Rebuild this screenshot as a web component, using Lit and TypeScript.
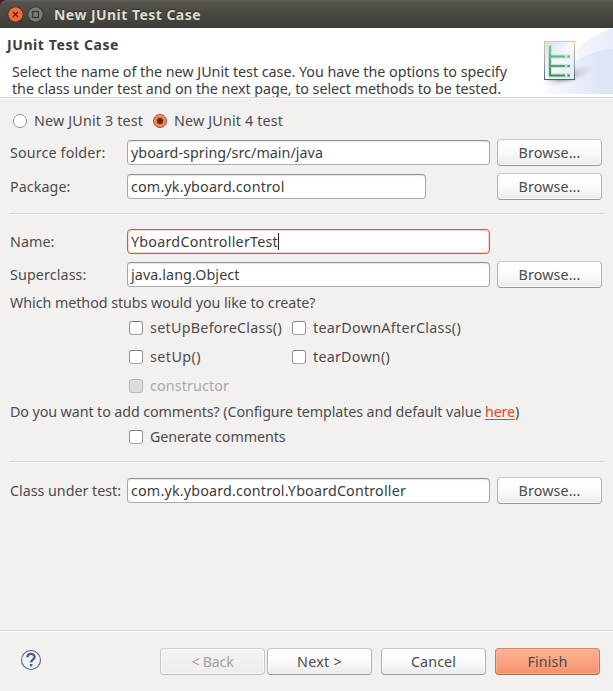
import { LitElement, html, css, svg, nothing } from "lit";
import { customElement, property } from "lit/decorators.js";
import { classMap } from "lit/directives/class-map.js";

// A run of text tracked so that it spans a given width.
@customElement("fit-text")
class FitText extends LitElement {
  @property() text = "";
  @property({ type: Number }) width = 0;
  static styles = css`
    :host { display: inline-block; white-space: pre; flex: none; }
    .run { display: inline-block; }
  `;
  render() {
    return html`<span class="run">${this.text}</span>`;
  }
  updated() {
    const run = this.renderRoot.querySelector(".run") as HTMLElement;
    run.style.letterSpacing = "0";
    const natural = run.getBoundingClientRect().width;
    run.style.letterSpacing = `${(this.width - natural) / this.text.length}px`;
  }
}

const t = (text: string, width: number) => html`<fit-text .text=${text} .width=${width}></fit-text>`;

@customElement("push-button")
class PushButton extends LitElement {
  @property() label = "";
  @property({ type: Number }) span = 0;
  @property() kind = "";
  static styles = css`
    :host { display: block; flex: none; width: 105px; height: 27px; }
    .btn {
      box-sizing: border-box; width: 105px; height: 27px; padding: 0; display: flex;
      align-items: center; justify-content: center; border-radius: 4px;
      border: 1px solid; border-color: #c9c7c4 #b4b2af #999794 #b4b2af;
      background: linear-gradient(#ffffff, #fafafa 50%, #ebeae8);
      box-shadow: inset 0 0 0 1px rgba(255, 255, 255, 0.6);
      font: inherit; color: #4c4c4c;
    }
    .disabled {
      border-color: #d3d1ce #c9c7c4 #c2c0bd #c9c7c4;
      background: linear-gradient(#f5f4f3, #eeedeb); color: #a3a2a0;
    }
    .primary {
      border-color: #c28a73 #b17e69 #a06d58 #b17e69;
      background: linear-gradient(#ffb191, #fba382 50%, #f5916c);
      box-shadow: inset 0 0 0 1px rgba(255, 190, 160, 0.5);
    }
  `;
  render() {
    return html`<button class=${classMap({ btn: true, [this.kind || "plain"]: true })}>
      ${t(this.label, this.span)}
    </button>`;
  }
}

@customElement("check-option")
class CheckOption extends LitElement {
  @property() label = "";
  @property({ type: Number }) span = 0;
  @property({ type: Boolean }) disabled = false;
  static styles = css`
    :host { display: block; }
    .opt { display: flex; align-items: center; height: 20px; gap: 7px; }
    .box {
      box-sizing: border-box; width: 14px; height: 14px; border-radius: 3px; background: #fff;
      border: 1px solid; border-color: #868482 #96948f #a5a3a0 #96948f;
    }
    .off { color: #aaa9a7; }
    .off .box { background: #dddcda; border-color: #b9b7b4; }
  `;
  render() {
    return html`<div class=${classMap({ opt: true, off: this.disabled })}>
      <span class="box"></span>${t(this.label, this.span)}
    </div>`;
  }
}

@customElement("form-row")
class FormRow extends LitElement {
  @property() label = "";
  @property({ type: Number }) labelSpan = 0;
  @property() value = "";
  @property({ type: Number }) valueSpan = 0;
  @property({ type: Boolean }) short = false;
  @property({ type: Boolean }) focused = false;
  @property({ type: Boolean }) browse = false;
  static styles = css`
    :host { display: block; }
    .row { display: grid; grid-template-columns: 117px 363px 105px; column-gap: 0; height: 27px; align-items: center; }
    .field {
      box-sizing: border-box; height: 25px; width: 363px; padding-left: 3px; display: flex; align-items: center;
      border: 1px solid; border-color: #94918b #aaa7a2 #b0ada8 #aaa7a2; border-radius: 4px;
      background: #fff; color: #3c3c3c; box-shadow: inset 0 1px 1px rgba(0, 0, 0, 0.1);
    }
    .short { width: 299px; }
    .focused { border-color: #d6592b; box-shadow: inset 0 0 0 1px #f8d5c6; }
    .caret { width: 1px; height: 17px; background: #222; }
    push-button { margin-left: 7px; }
  `;
  render() {
    return html`<div class="row">
      ${t(this.label, this.labelSpan)}
      <div class=${classMap({ field: true, short: this.short, focused: this.focused })}>
        ${t(this.value, this.valueSpan)}${this.focused ? html`<span class="caret"></span>` : nothing}
      </div>
      ${this.browse ? html`<push-button .label=${"Browse..."} .span=${62}></push-button>` : nothing}
    </div>`;
  }
}

const bannerArt = svg`
  <defs>
    <linearGradient id="sweep" x1="0" x2="1"><stop offset="0" stop-color="#fff"/><stop offset="1" stop-color="#dde4f6"/></linearGradient>
    <linearGradient id="sweep2" x1="0" x2="1"><stop offset="0" stop-color="#fff"/><stop offset=".8" stop-color="#dce4f6"/></linearGradient>
    <linearGradient id="page" x1="0" y1="0" x2="1" y2="1"><stop offset="0" stop-color="#d5e0f2"/><stop offset=".5" stop-color="#f4f8fd"/><stop offset="1" stop-color="#dfe8f5"/></linearGradient>
    <linearGradient id="edge" x1="0" y1="0" x2="0" y2="1"><stop offset="0" stop-color="#e8c48f"/><stop offset=".55" stop-color="#9aa3a8"/><stop offset="1" stop-color="#4d6474"/></linearGradient>
    <linearGradient id="green" x1="0" y1="0" x2="0" y2="1"><stop offset="0" stop-color="#80c09a"/><stop offset="1" stop-color="#3c9160"/></linearGradient>
    <radialGradient id="shade"><stop offset="0" stop-color="#8d8798" stop-opacity=".65"/><stop offset="1" stop-color="#b9b5c4" stop-opacity="0"/></radialGradient>
  </defs>
  <path d="M40 66C62 52 68 12 113 0V66Z" fill="url(#sweep)" opacity=".65"/>
  <path d="M38 66C62 58 66 24 113 21V66Z" fill="url(#sweep2)" opacity=".9"/>
  <ellipse cx="68" cy="48" rx="27" ry="8" fill="url(#shade)" transform="rotate(-18 68 48)"/>
  <ellipse cx="60" cy="52" rx="19" ry="3" fill="url(#shade)"/>
  <rect x="44.5" y="13.5" width="30" height="38" fill="url(#page)" stroke="url(#edge)"/>
  <path d="M50 17V48M50 28.5H70M50 38H70M50 47.5H70" fill="none" stroke="#c7e3d3" stroke-width="4"/>
  <path d="M49 18H51V46.500H65V48.500H49ZM51 27.500H65V29.500H51ZM51 37H65V39H51ZM67.500 27.500H70V29.500H67.500ZM67.500 37H70V39H67.500ZM67.500 46.500H70V48.500H67.500Z" fill="url(#green)"/>`;

@customElement("app-root")
class AppRoot extends LitElement {
  static styles = css`
    :host {
      display: block; width: 613px; height: 691px; overflow: hidden;
      font: 14.3px/20px "Noto Sans", "Open Sans", sans-serif; color: #4c4c4c; background: #f2f1f0;
    }
    .window { display: flex; flex-direction: column; height: 691px; }
    .corner { background: #4c1139; flex: none; }
    .titlebar {
      height: 28px; flex: none; box-sizing: border-box; display: flex; align-items: center; padding: 1px 0 0 7px;
      background: linear-gradient(#64625a, #55534b 8%, #3d3c37); border-radius: 6px 0 0 0;
      color: #dfdbd2; font-weight: 700; font-size: 14px; text-shadow: 0 -1px 1px #2a2925;
    }
    .titlebar svg { margin-right: 3px; flex: none; }
    .titlebar fit-text { margin-left: 7px; }
    .banner {
      flex: none; height: 69px; display: flex; justify-content: space-between; background: #fff;
      color: #3c3c3c; overflow: hidden;
    }
    .heading { font-weight: 700; padding: 7px 0 0 7px; font-size: 14px; }
    .lead { padding: 8px 0 0 12px; line-height: 17px; }
    .lead fit-text { display: block; }
    .art { width: 113px; height: 66px; flex: none; margin-left: -20px; }
    .line { flex: none; height: 1px; background: #dad8d6; border-bottom: 1px solid #fafafa; }
    .body { flex: 1; display: flex; flex-direction: column; background: #f2f1f0; }
    .form { flex: 1; padding: 0 9px 0 10px; }
    .radios { display: flex; align-items: center; height: 20px; margin-top: 12px; padding-left: 2px; }
    .radio { flex: none; margin-right: 6px; }
    .second { margin-left: 9px; }
    .source { margin-top: 8px; } .package { margin-top: 7px; }
    .split1 { margin-top: 13px; } .name { margin-top: 13px; } .super { margin-top: 6px; }
    .stubs { margin-top: 5px; height: 20px; }
    .checks { display: grid; grid-template-columns: 163px auto; row-gap: 9px; margin: 5px 0 0 119px; }
    .comments { display: flex; height: 20px; margin-top: 6px; }
    .link { color: #dd4814; height: 17px; border-bottom: 1px solid #dd4814; }
    .generate { margin: 5px 0 0 119px; }
    .split2 { margin-top: 14px; } .tested { margin-top: 14px; }
    .footer { height: 59px; flex: none; box-sizing: border-box; display: flex; padding: 16px 13px 0 20px; }
    .help { margin-top: 1px; margin-right: 118px; flex: none; }
    .cancel { margin-left: 9px; } .finish { margin-left: 9px; } .next { margin-left: 2px; }
  `;

  render() {
    return html`<div class="window">
      <div class="corner"><div class="titlebar">
        <svg width="17" height="17" viewBox="0 0 17 17">
          <circle cx="8.500" cy="8.500" r="8" fill="#33322e"/><circle cx="8.500" cy="8.500" r="7.200" fill="#ee6a3e"/>
          <path d="M6 6L11 11M11 6L6 11" stroke="#552315" stroke-width="1.300"/>
        </svg>
        <svg width="17" height="17" viewBox="0 0 17 17">
          <circle cx="8.500" cy="8.500" r="8" fill="#34332f"/><circle cx="8.500" cy="8.500" r="7.200" fill="#7b7a73"/>
          <rect x="5.500" y="5.500" width="6" height="6" fill="none" stroke="#3a3935" stroke-width="1.300"/>
        </svg>
        ${t("New JUnit Test Case", 147)}
      </div></div>
      <div class="banner">
        <div>
          <div class="heading">${t("JUnit Test Case", 112)}</div>
          <div class="lead">
            ${t("Select the name of the new JUnit test case. You have the options to specify", 495)}
            ${t("the class under test and on the next page, to select methods to be tested.", 489)}
          </div>
        </div>
        <svg class="art" viewBox="0 0 113 66">${bannerArt}</svg>
      </div>
      <div class="body">
        <div class="line"></div>
        <div class="form">
          <div class="radios">
            <svg class="radio" width="16" height="16" viewBox="0 0 16 16">
              <circle cx="8" cy="8" r="6.600" fill="#fff" stroke="#9b9996"/>
            </svg>
            ${t("New JUnit 3 test", 109)}
            <svg class="radio second" width="16" height="16" viewBox="0 0 16 16">
              <circle cx="8" cy="8" r="6.500" fill="#ee7647" stroke="#a9502f"/>
              <circle cx="8" cy="8" r="5.200" fill="none" stroke="#f9a17d" stroke-width=".8"/>
              <circle cx="8" cy="8" r="3" fill="#5d2c1c"/>
            </svg>
            ${t("New JUnit 4 test", 109)}
          </div>
          <form-row class="source" label="Source folder:" .labelSpan=${95.5} value="yboard-spring/src/main/java" .valueSpan=${192} browse></form-row>
          <form-row class="package" label="Package:" .labelSpan=${60.5} value="com.yk.yboard.control" .valueSpan=${153.5} short browse></form-row>
          <div class="line split1"></div>
          <form-row class="name" label="Name:" .labelSpan=${44.5} value="YboardControllerTest" .valueSpan=${147} focused></form-row>
          <form-row class="super" label="Superclass:" .labelSpan=${76.5} value="java.lang.Object" .valueSpan=${108.5} browse></form-row>
          <div class="stubs">${t("Which method stubs would you like to create?", 305.5)}</div>
          <div class="checks">
            <check-option label="setUpBeforeClass()" .span=${132}></check-option>
            <check-option label="tearDownAfterClass()" .span=${148}></check-option>
            <check-option label="setUp()" .span=${51}></check-option>
            <check-option label="tearDown()" .span=${77}></check-option>
            <check-option label="constructor" .span=${79} disabled></check-option>
          </div>
          <div class="comments">
            ${t("Do you want to add comments? (Configure templates and default value ", 475)}<span class="link">${t("here", 30)}</span>${t(")", 5)}
          </div>
          <check-option class="generate" label="Generate comments" .span=${135.5}></check-option>
          <div class="line split2"></div>
          <form-row class="tested" label="Class under test:" .labelSpan=${111} value="com.yk.yboard.control.YboardController" .valueSpan=${275} browse></form-row>
        </div>
        <div class="line"></div>
        <div class="footer">
          <svg class="help" width="22" height="22" viewBox="0 0 22 22">
            <circle cx="11" cy="11" r="9.500" fill="#f1f3f7" stroke="#566685" stroke-width="1.100"/>
            <path d="M7.400 8.300C7.400 3.900 14.600 3.900 14.600 8.100C14.600 10.700 11.100 10.700 11.100 13.400" fill="none" stroke="#4c5d80" stroke-width="2.300"/>
            <rect x="9.900" y="14.900" width="2.500" height="2.500" rx=".7" fill="#4c5d80"/>
          </svg>
          <push-button label="< Back" .span=${42} kind="disabled"></push-button>
          <push-button class="next" label="Next >" .span=${45}></push-button>
          <push-button class="cancel" label="Cancel" .span=${45}></push-button>
          <push-button class="finish" label="Finish" .span=${40} kind="primary"></push-button>
        </div>
      </div>
    </div>`;
  }
}
